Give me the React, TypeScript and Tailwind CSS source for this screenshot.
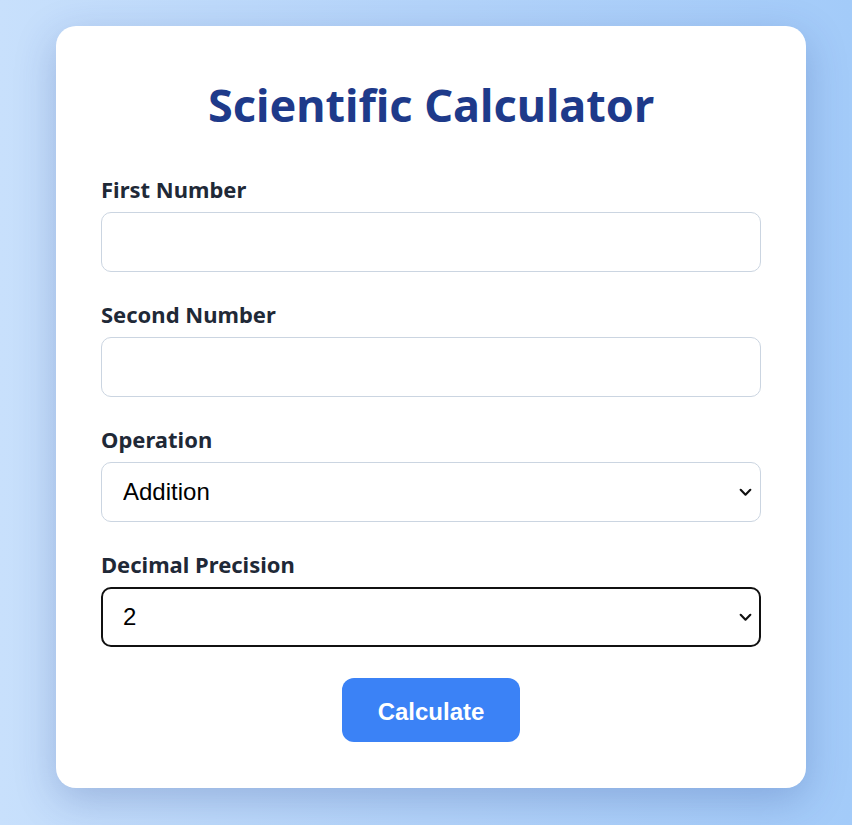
import React from "react";

function Chevron() {
  return (
    <svg className="pointer-events-none absolute right-[8px] top-1/2 -translate-y-1/2" width="15" height="15" viewBox="0 0 14 14" fill="none">
      <path d="M2.5 5 L7 9.5 L11.5 5" stroke="#111" strokeWidth="2" strokeLinecap="round" strokeLinejoin="round" />
    </svg>
  );
}

export default function App() {
  const labelCls = "block h-[26px] leading-[26px] mb-[10px] text-[22px] font-bold text-[#1f2937] [font-family:'Noto_Sans',sans-serif]";
  return (
    <div className="min-h-[825px] w-full bg-[linear-gradient(to_right,#c8e0fc_0%,#b4d4fa_50%,#a3cbf9_100%)] pt-[26px] pl-[10px] flex justify-center">
      <div className="w-[750px] h-[762px] bg-white rounded-[20px] shadow-[0_12px_40px_rgba(30,58,138,0.25)] px-[45px] pt-[43px] pb-[45px] flex flex-col">
        <h1 className="text-center text-[45px] leading-[72px] font-bold text-[#1e3a8a] mb-[35px] [font-family:'Noto_Sans',sans-serif]">
          Scientific Calculator
        </h1>
        <div className="mb-[29px]">
          <label className={labelCls}>First Number</label>
          <input type="text" className="block w-full h-[60px] rounded-[10px] border border-[#cbd5e1] bg-white px-[22px] text-[24px] outline-none" />
        </div>
        <div className="mb-[29px]">
          <label className={labelCls}>Second Number</label>
          <input type="text" className="block w-full h-[60px] rounded-[10px] border border-[#cbd5e1] bg-white px-[22px] text-[24px] outline-none" />
        </div>
        <div className="mb-[29px]">
          <label className={labelCls}>Operation</label>
          <div className="relative">
            <select defaultValue="add" className="block w-full h-[60px] appearance-none rounded-[10px] border border-[#cbd5e1] bg-white pl-[21px] text-[24px] text-black outline-none [font-family:'Liberation_Sans',Arial,sans-serif]">
              <option value="add">Addition</option>
            </select>
            <Chevron />
          </div>
        </div>
        <div className="mb-[31px]">
          <label className={labelCls}>Decimal Precision</label>
          <div className="relative">
            <select defaultValue="2" className="block w-full h-[60px] appearance-none rounded-[10px] border-2 border-[#111] bg-white pl-[20px] text-[24px] text-black outline-none [font-family:'Liberation_Sans',Arial,sans-serif]">
              <option value="2">2</option>
            </select>
            <Chevron />
          </div>
        </div>
        <div className="flex justify-center">
          <button className="w-[178px] h-[64px] rounded-[12px] bg-[#3b82f6] text-white text-[24px] font-bold pt-[3px] [font-family:'Liberation_Sans',Arial,sans-serif]">
            Calculate
          </button>
        </div>
      </div>
    </div>
  );
}
